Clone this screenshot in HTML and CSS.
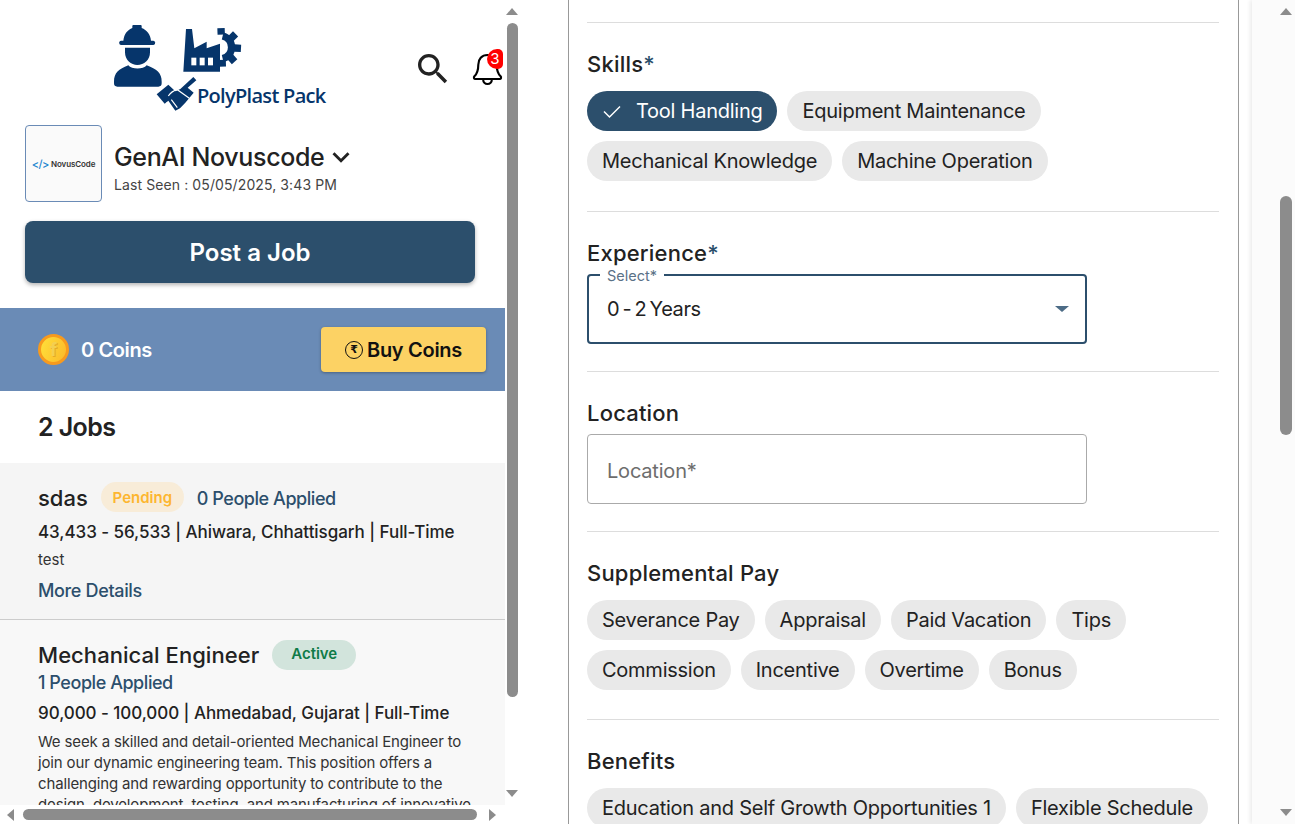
FILE: index.html
```html
<!DOCTYPE html>
<html lang="en">
<head>
  <meta charset="UTF-8">
  <meta name="viewport" content="width=device-width, initial-scale=1.0">
  <title>PolyPlast Pack - Post a Job</title>
  <link rel="stylesheet" href="styles.css">
</head>
<body>
  <div class="app">
    <aside class="sidebar">
      <div class="sidebar-body">
        <div class="sidebar-content">
          <header class="brand-row">
            <div class="logo">
              <svg class="logo-art" viewBox="0 0 720 315" width="240" height="105" fill="#06356b">
                <!-- worker -->
                <path d="M70 78C72 56 84 44 97 39V33Q97 30 100 30H122Q125 30 125 33V39C140 45 152 58 153 78Z"/>
                <rect x="58" y="77" width="107" height="13" rx="5"/>
                <path d="M75 98H150V112C150 135 132 150 112 150C93 150 75 135 75 112Z"/>
                <path d="M42 200C42 174 56 162 85 151C95 164 130 164 140 151C170 162 185 174 185 200V205Q185 215 175 215H52Q42 215 42 205Z"/>
                <!-- factory -->
                <path d="M250 170L258 42H276L283 100L320 80V100L360 86V170Z"/>
                <rect x="274" y="128" width="15" height="23" fill="#fff"/>
                <rect x="299" y="128" width="15" height="23" fill="#fff"/>
                <rect x="324" y="128" width="15" height="23" fill="#fff"/>
                <!-- gear -->
                <path d="M368 63A35 35 0 0 1 368 131" fill="none" stroke="#06356b" stroke-width="22"/>
                <g>
                  <rect x="403" y="86" width="20" height="22" transform="rotate(-92 365 97)"/>
                  <rect x="403" y="86" width="20" height="22" transform="rotate(-44 365 97)"/>
                  <rect x="403" y="86" width="20" height="22" transform="rotate(3 365 97)"/>
                  <rect x="403" y="86" width="20" height="22" transform="rotate(48 365 97)"/>
                  <rect x="403" y="86" width="20" height="22" transform="rotate(88 365 97)"/>
                </g>
                <!-- handshake -->
                <path d="M205 209L170 238L194 266L205 257L226 287L240 280L256 263L281 233L263 218L289 196L280 186L241 222L226 229Z"/>
                <path d="M205 243Q215 228 232 224L268 250M200 262L218 285M214 254L232 278" fill="none" stroke="#fff" stroke-width="3.500"/>
              </svg>
              <span class="logo-text">PolyPlast Pack</span>
            </div>
            <div class="header-icons">
              <svg class="search-icon" viewBox="0 0 24 24" width="40" height="40" fill="#222">
                <path d="M15.5 14h-.79l-.28-.27C15.41 12.590 16 11.110 16 9.500 16 5.910 13.090 3 9.500 3S3 5.910 3 9.500 5.910 16 9.500 16c1.610 0 3.090-.59 4.230-1.570l.27.28v.79l5 4.990L20.490 19l-4.990-5zm-6 0C7.010 14 5 11.990 5 9.500S7.010 5 9.500 5 14 7.010 14 9.500 11.990 14 9.500 14z"/>
              </svg>
              <div class="bell">
                <svg viewBox="0 0 32 34" width="31" height="33" fill="none" stroke="#000" stroke-width="2.200" stroke-linejoin="round" stroke-linecap="round">
                  <path d="M16 2c-6 0-9.500 4.500-9.500 10 0 6-1.500 9.500-4 12-1 1.200-.5 2.800 1 2.800h25c1.500 0 2-1.600 1-2.800-2.500-2.500-4-6-4-12C25.500 6.500 22 2 16 2z"/>
                  <path d="M11.500 27c0 3 2 5 4.500 5s4.500-2 4.500-5"/>
                </svg>
                <span class="bell-count">3</span>
              </div>
            </div>
          </header>

          <div class="profile">
            <div class="company-logo">
              <span class="code-mark">&lt;/&gt;</span><span class="code-name">NovusCode</span>
            </div>
            <div class="company-info">
              <div class="company-name">GenAI Novuscode
                <svg viewBox="0 0 24 24" width="34" height="34" fill="#222"><path d="M7.410 8.590 12 13.170l4.590-4.580L18 10l-6 6-6-6z"/></svg>
              </div>
              <div class="last-seen">Last Seen : 05/05/2025, 3:43 PM</div>
            </div>
          </div>

          <button class="post-btn">Post a Job</button>

          <div class="coin-bar">
            <div class="coin-info">
              <span class="coin"><span class="coin-mark">f</span></span>
              <span>0 Coins</span>
            </div>
            <button class="buy-btn"><span class="rupee">₹</span>Buy Coins</button>
          </div>

          <h2 class="jobs-count">2 Jobs</h2>

          <div class="job job-first">
            <div class="job-head">
              <span class="job-title">sdas</span>
              <span class="badge badge-pending">Pending</span>
              <span class="applied">0 People Applied</span>
            </div>
            <p class="job-meta">43,433 - 56,533 | Ahiwara, Chhattisgarh | Full-Time</p>
            <p class="job-desc">test</p>
            <a class="more">More Details</a>
          </div>

          <div class="job job-second">
            <div class="job-head">
              <span class="job-title job-title-big">Mechanical Engineer</span>
              <span class="badge badge-active">Active</span>
            </div>
            <div class="applied applied-block">1 People Applied</div>
            <p class="job-meta job-meta-second">90,000 - 100,000 | Ahmedabad, Gujarat | Full-Time</p>
            <p class="job-desc job-desc-long">We seek a skilled and detail-oriented Mechanical Engineer to join our dynamic engineering team. This position offers a challenging and rewarding opportunity to contribute to the design, development, testing, and manufacturing of innovative</p>
          </div>
        </div>
        <div class="vbar">
          <span class="arrow arrow-up"></span>
          <span class="thumb-v"></span>
          <span class="arrow arrow-down"></span>
        </div>
      </div>
      <div class="hbar">
        <span class="arrow arrow-left"></span>
        <span class="thumb-h"></span>
        <span class="arrow arrow-right"></span>
      </div>
    </aside>

    <main class="main">
      <div class="card">
        <section class="field field-chips">
          <h3 class="field-label">Skills<span class="req">*</span></h3>
          <div class="chips">
            <span class="chip chip-on">
              <svg viewBox="0 0 24 24" width="24" height="24" fill="none" stroke="#fff" stroke-width="1.500"><path d="M4 12.500l5.500 5.500L20 7.500"/></svg>
              Tool Handling
            </span>
            <span class="chip">Equipment Maintenance</span>
            <span class="chip">Mechanical Knowledge</span>
            <span class="chip">Machine Operation</span>
          </div>
        </section>

        <section class="field">
          <h3 class="field-label field-label-tight">Experience<span class="req">*</span></h3>
          <div class="select">
            <span class="select-legend">Select*</span>
            <span class="select-value">0 - 2 Years</span>
            <span class="select-caret"></span>
          </div>
        </section>

        <section class="field">
          <h3 class="field-label field-label-tight">Location</h3>
          <div class="input">Location*</div>
        </section>

        <section class="field field-chips">
          <h3 class="field-label">Supplemental Pay</h3>
          <div class="chips">
            <span class="chip">Severance Pay</span>
            <span class="chip">Appraisal</span>
            <span class="chip">Paid Vacation</span>
            <span class="chip">Tips</span>
            <span class="chip">Commission</span>
            <span class="chip">Incentive</span>
            <span class="chip">Overtime</span>
            <span class="chip">Bonus</span>
          </div>
        </section>

        <section class="field field-chips field-last">
          <h3 class="field-label">Benefits</h3>
          <div class="chips">
            <span class="chip">Education and Self Growth Opportunities 1</span>
            <span class="chip">Flexible Schedule</span>
          </div>
        </section>
      </div>
    </main>

    <div class="page-gutter">
      <span class="arrow arrow-up"></span>
      <span class="thumb-page"></span>
      <span class="arrow arrow-down"></span>
    </div>
  </div>
</body>
</html>
```

FILE: styles.css
```css
* {
  box-sizing: border-box;
}
html, body {
  margin: 0;
  height: 100%;
  overflow: hidden;
}
body {
  font-family: Inter, "Noto Sans", sans-serif;
  color: #222;
  background: #fff;
}
p, h2, h3 {
  margin: 0;
}
button {
  font-family: inherit;
  border: none;
  cursor: pointer;
}
.app {
  display: flex;
  height: 824px;
}

/* sidebar */
.sidebar {
  width: 525px;
  flex: none;
  display: flex;
  flex-direction: column;
  height: 824px;
}
.sidebar-body {
  display: flex;
  height: 805px;
}
.sidebar-content {
  width: 505px;
  flex: none;
  overflow: hidden;
}
.brand-row {
  display: flex;
  justify-content: space-between;
  height: 125px;
  padding: 15px 2px 0 100px;
}
.logo {
  position: relative;
  width: 240px;
  height: 105px;
}
.logo-art {
  display: block;
}
.logo-text {
  position: absolute;
  left: 97px;
  top: 69px;
  font-family: "Open Sans", sans-serif;
  font-weight: 600;
  font-size: 20px;
  line-height: 24px;
  letter-spacing: -0.7px;
  color: #06356b;
  white-space: nowrap;
}
.header-icons {
  display: flex;
  align-items: flex-start;
  gap: 19px;
  padding-top: 34px;
}
.search-icon {
  display: block;
}
.bell {
  position: relative;
  width: 31px;
  height: 38px;
  padding-top: 4px;
}
.bell svg {
  display: block;
}
.bell-count {
  position: absolute;
  top: 0;
  right: 0;
  width: 16px;
  height: 20px;
  border-radius: 10px 5px 5px 10px;
  background: #f00;
  color: #fff;
  font-size: 15px;
  line-height: 20px;
  text-align: center;
}
.profile {
  display: flex;
  align-items: center;
  gap: 12px;
  padding-left: 25px;
  height: 77px;
}
.company-logo {
  width: 77px;
  height: 77px;
  flex: none;
  display: flex;
  align-items: center;
  justify-content: center;
  gap: 2px;
  border: 1px solid #6a8bb6;
  border-radius: 4px;
  background: #fafafa;
}
.code-mark {
  color: #1f86d0;
  font-size: 11px;
  font-weight: 500;
  letter-spacing: -0.5px;
}
.code-name {
  color: #333;
  font-size: 8px;
  font-weight: 600;
  letter-spacing: -0.1px;
}
.company-info {
  padding-top: 8px;
}
.company-name {
  display: flex;
  align-items: center;
  height: 32px;
  font-size: 25px;
  font-weight: 500;
  letter-spacing: -0.35px;
}
.last-seen {
  font-size: 14px;
  line-height: 20px;
  color: #444;
  letter-spacing: 0.1px;
  margin-top: 2px;
}
.post-btn {
  display: block;
  width: 450px;
  height: 62px;
  margin: 19px 0 25px 25px;
  border-radius: 8px;
  background: #2c4f6c;
  color: #fff;
  font-size: 24px;
  font-weight: 600;
  box-shadow: 0 2px 4px rgba(0,0,0,0.3);
}
.coin-bar {
  display: flex;
  justify-content: space-between;
  align-items: center;
  height: 83px;
  padding: 0 19px 0 38px;
  background: #6a8bb6;
}
.coin-info {
  display: flex;
  align-items: center;
  gap: 12px;
  color: #fff;
  font-size: 20px;
  font-weight: 600;
  letter-spacing: -0.4px;
}
.coin {
  width: 31px;
  height: 31px;
  display: flex;
  align-items: center;
  justify-content: center;
  border-radius: 50%;
  border: 3px solid #f79a1e;
  background: linear-gradient(110deg, #ffe03a, #fbb92a);
}
.coin-mark {
  color: #f3cf50;
  font-size: 18px;
  font-weight: 700;
  text-shadow: 1px 1px 0 #e5a92a;
}
.buy-btn {
  display: flex;
  align-items: center;
  justify-content: center;
  gap: 4px;
  width: 165px;
  height: 45px;
  border-radius: 4px;
  background: #fcd264;
  color: #111;
  font-size: 20px;
  font-weight: 600;
  letter-spacing: -0.3px;
  box-shadow: 0 1px 3px rgba(0,0,0,0.3);
}
.rupee {
  width: 18px;
  height: 18px;
  border: 1.5px solid #111;
  border-radius: 50%;
  font-family: "DejaVu Sans", sans-serif;
  font-size: 11px;
  line-height: 15px;
  letter-spacing: 0;
  text-align: center;
}
.jobs-count {
  height: 72px;
  padding-left: 38px;
  font-size: 25px;
  line-height: 72px;
  font-weight: 600;
  letter-spacing: -0.6px;
}
.job {
  padding: 19px 20px 0 38px;
  border-bottom: 1px solid #ccc;
}
.job-first {
  height: 157px;
  background: #f5f5f5;
}
.job-first .job-title, .job-first .applied {
  margin-top: 2px;
}
.job-second {
  background: #f8f8f8;
  border-bottom: none;
  height: 300px;
  padding-top: 20px;
}
.job-head {
  display: flex;
  align-items: center;
  gap: 13px;
  height: 30px;
}
.job-title {
  font-size: 22px;
  font-weight: 500;
}
.job-title-big {
  letter-spacing: 0.05px;
}
.badge {
  display: inline-flex;
  align-items: center;
  justify-content: center;
  height: 30px;
  border-radius: 15px;
  font-size: 15px;
  font-weight: 600;
}
.badge-pending {
  width: 83px;
  background: #f8ecd8;
  color: #fdb62f;
}
.badge-active {
  width: 84px;
  padding-bottom: 3px;
  background: #d2e4dc;
  color: #0f7b48;
}
.applied {
  color: #2c4f6c;
  font-size: 18px;
  font-weight: 500;
  letter-spacing: -0.45px;
}
.applied-block {
  line-height: 26px;
}
.job-meta {
  margin-top: 7px;
  font-size: 17px;
  line-height: 26px;
  font-weight: 500;
  letter-spacing: -0.05px;
}
.job-meta-second {
  margin-top: 4px;
}
.job-desc {
  margin-top: 4px;
  font-size: 15px;
  line-height: 21px;
  color: #333;
}
.job-desc-long {
  margin-top: 5px;
  letter-spacing: -0.15px;
}
.more {
  display: block;
  margin-top: 9px;
  color: #2c4f6c;
  font-size: 18px;
  line-height: 24px;
  font-weight: 500;
  letter-spacing: -0.35px;
}

/* fake scrollbars */
.vbar, .page-gutter {
  display: flex;
  flex-direction: column;
}
.vbar {
  width: 20px;
  flex: none;
  align-items: center;
  padding: 8px 6px 8px 0;
}
.thumb-v {
  width: 11px;
  height: 674px;
  margin: 8px 0 auto;
  border-radius: 6px;
  background: #8c8c8c;
}
.hbar {
  display: flex;
  align-items: center;
  height: 19px;
  padding-left: 7px;
}
.thumb-h {
  width: 454px;
  height: 11px;
  margin: 0 12px 0 9px;
  border-radius: 6px;
  background: #8c8c8c;
}
.arrow {
  display: block;
  width: 0;
  height: 0;
  flex: none;
}
.arrow-up {
  border: 6.5px solid transparent;
  border-top: none;
  border-bottom: 7px solid #8c8c8c;
}
.arrow-down {
  border: 6.5px solid transparent;
  border-bottom: none;
  border-top: 7px solid #8c8c8c;
}
.arrow-left {
  border: 6.5px solid transparent;
  border-left: none;
  border-right: 7px solid #8c8c8c;
}
.arrow-right {
  border: 6.5px solid transparent;
  border-right: none;
  border-left: 7px solid #8c8c8c;
}

/* form */
.main {
  flex: 1;
  min-width: 0;
  height: 824px;
  overflow: hidden;
  padding: 0 14px 0 43px;
}
.card {
  width: 671px;
  height: 824px;
  padding: 22px 19px 0 18px;
  border-left: 1px solid #999;
  border-right: 1px solid #999;
}
.card::before {
  content: "";
  display: block;
  height: 1px;
  background: #ddd;
}
.field {
  padding: 27px 0;
  border-bottom: 1px solid #ddd;
}
.field-chips {
  padding-bottom: 29.5px;
}
.field-last {
  border-bottom: none;
}
.field-label {
  font-size: 22px;
  line-height: 28px;
  font-weight: 500;
  letter-spacing: 0.2px;
  margin-bottom: 13px;
}
.field-label-tight {
  margin-bottom: 7px;
}
.req {
  color: #2c4f6c;
}
.chips {
  display: flex;
  flex-wrap: wrap;
  gap: 10px;
}
.chip {
  display: inline-flex;
  align-items: center;
  height: 40px;
  padding: 0 15px;
  border-radius: 20px;
  background: #e9e9e9;
  font-size: 20px;
  letter-spacing: -0.25px;
  color: #222;
  white-space: nowrap;
}
.chip-on {
  gap: 12px;
  background: #2c4f6c;
  color: #fff;
  padding-left: 13px;
}
.select {
  position: relative;
  display: flex;
  align-items: center;
  width: 500px;
  height: 70px;
  padding: 0 16px 0 18px;
  border: 2px solid #2c4f6c;
  border-radius: 4px;
}
.select-value {
  font-size: 20px;
  letter-spacing: -0.4px;
  word-spacing: -2px;
}
.select-legend {
  position: absolute;
  top: -8px;
  left: 11px;
  padding: 0 7px;
  background: #fff;
  color: #5a7187;
  font-size: 14.5px;
  line-height: 16px;
}
.select-caret {
  margin: 1px 0 0 auto;
  border: 7px solid transparent;
  border-top: 6px solid #4d6c86;
  border-bottom: none;
}
.input {
  display: flex;
  align-items: center;
  width: 500px;
  height: 70px;
  padding: 5px 0 0 19px;
  border: 1px solid #aaa;
  border-radius: 4px;
  color: #6d6d6d;
  font-size: 20px;
  letter-spacing: -0.2px;
}

/* page gutter */
.page-gutter {
  position: relative;
  width: 43px;
  flex: none;
  height: 824px;
  align-items: flex-end;
  justify-content: space-between;
  padding: 8px 3px 8px 0;
  background: #fbfbfb;
  box-shadow: -2px 0 4px rgba(0,0,0,0.08);
}
.thumb-page {
  position: absolute;
  top: 196px;
  left: 28px;
  width: 12px;
  height: 239px;
  border-radius: 6px;
  background: #8c8c8c;
}
```
